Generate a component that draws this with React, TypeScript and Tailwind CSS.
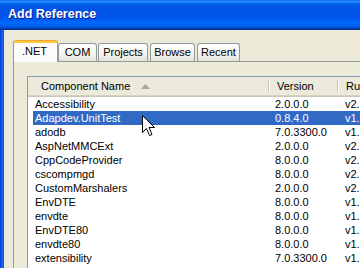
const ROWS = [
  { name: 'Accessibility', version: '2.0.0.0', runtime: 'v2.' },
  { name: 'Adapdev.UnitTest', version: '0.8.4.0', runtime: 'v1.', selected: true },
  { name: 'adodb', version: '7.0.3300.0', runtime: 'v1.' },
  { name: 'AspNetMMCExt', version: '2.0.0.0', runtime: 'v2.' },
  { name: 'CppCodeProvider', version: '8.0.0.0', runtime: 'v2.' },
  { name: 'cscompmgd', version: '8.0.0.0', runtime: 'v2.' },
  { name: 'CustomMarshalers', version: '2.0.0.0', runtime: 'v2.' },
  { name: 'EnvDTE', version: '8.0.0.0', runtime: 'v1.' },
  { name: 'envdte', version: '8.0.0.0', runtime: 'v1.' },
  { name: 'EnvDTE80', version: '8.0.0.0', runtime: 'v1.' },
  { name: 'envdte80', version: '8.0.0.0', runtime: 'v1.' },
  { name: 'extensibility', version: '7.0.3300.0', runtime: 'v1.' }
]

const TABS = [
  { label: 'COM', cls: 'w-[39px]' },
  { label: 'Projects', cls: 'w-[50px] ml-[1px]' },
  { label: 'Browse', cls: 'w-[45px] ml-[2px]' },
  { label: 'Recent', cls: 'w-[43px] ml-[2px]' }
]

function HeaderSep() {
  return (
    <div className="flex h-[13px] self-center">
      <div className="w-px bg-[#c7c5b2]" />
      <div className="w-px bg-white" />
    </div>
  )
}

export default function App() {
  return (
    <div className="relative w-[360px] h-[268px] overflow-hidden flex flex-col bg-[#ece9d8] font-['Liberation_Sans',Arial,sans-serif] text-[11px] text-black select-none">
      {/* title bar */}
      <div className="h-[30px] shrink-0 flex items-center pl-[8px] pb-[2px] bg-[linear-gradient(to_bottom,#0058ee_0%,#3593ff_4%,#288eff_6%,#127dff_8%,#036ffc_10%,#0262ee_14%,#0057e5_20%,#0054e3_24%,#0055eb_56%,#005bf5_66%,#026afe_76%,#0062ef_86%,#0052d6_92%,#0040ab_94%,#003092_100%)]">
        <span className="text-white font-bold text-[12.5px] [text-shadow:1px_1px_#0c1b8a]">Add Reference</span>
      </div>

      <div className="flex-1 flex min-h-0">
        <div className="w-[4px] shrink-0 bg-[linear-gradient(to_right,#0831d9,#166aee_50%,#0855dd)]" />

        <div className="flex-1 flex flex-col pl-[9px] pt-[10px] min-w-0">
          {/* tabs */}
          <div className="h-[21px] shrink-0 flex items-end">
            <div className="relative z-10 w-[45px] h-[22px] -mb-px flex flex-col bg-[#fcfcfe] border-l border-r border-[#919b9c] rounded-t-[3px] overflow-hidden">
              <div className="h-[3px] bg-[linear-gradient(to_bottom,#e68b2c,#ffc73c_40%,#ffc73c)]" />
              <div className="flex-1 flex items-center pl-[8px] pb-[2px]">.NET</div>
            </div>
            {TABS.map((t) => (
              <div
                key={t.label}
                className={`${t.cls} h-[18px] flex items-center justify-center border border-b-0 border-[#919b9c] rounded-t-[3px] bg-[linear-gradient(to_bottom,#ffffff,#f3f3ef_60%,#e3e2da)]`}
              >
                {t.label}
              </div>
            ))}
          </div>

          {/* tab page */}
          <div className="flex-1 border-l border-t border-[#919b9c] bg-[#ecead9] pl-[13px] pt-[14px] min-h-0">
            <div className="w-[400px] h-[300px] border border-[#7f9db9] bg-white flex flex-col">
              {/* header */}
              <div className="h-[20px] shrink-0 flex flex-col">
                <div className="flex-1 flex bg-[#ebeadb]">
                  <div className="w-[240px] flex items-center pl-[13px] pt-[1px]">
                    <span>Component Name</span>
                    <svg width="9" height="5" viewBox="0 0 9 5" className="ml-[11px]">
                      <polygon points="4.5,0 9,5 0,5" fill="#aca899" />
                    </svg>
                  </div>
                  <HeaderSep />
                  <div className="w-[67px] flex items-center pl-[7px] pt-[1px]">Version</div>
                  <HeaderSep />
                  <div className="flex-1 flex items-center pl-[7px] pt-[1px]">Runtime</div>
                </div>
                <div className="h-px bg-[#e2decd]" />
                <div className="h-px bg-[#d6d2c2]" />
                <div className="h-px bg-[#cbc7b8]" />
              </div>

              {/* rows */}
              <div className="flex flex-col">
                {ROWS.map((r) => (
                  <div key={r.name} className="h-[14px] flex pl-[5px]">
                    <div className={`flex-1 flex items-center ${r.selected ? 'bg-[#316ac5] text-white' : ''}`}>
                      <div className="w-[235px] pl-[2px]">{r.name}</div>
                      <div className="w-[69px] pl-[7px]">{r.version}</div>
                      <div className="pl-[8px]">{r.runtime}</div>
                    </div>
                  </div>
                ))}
              </div>
            </div>
          </div>
        </div>
      </div>

      {/* mouse pointer */}
      <svg width="13" height="22" viewBox="0 0 13 22" className="absolute left-[142px] top-[115px]">
        <polygon
          points="0.5,0.5 0.5,17.5 4.5,13.5 7.5,20.5 10,19.5 7,12.5 12.5,12.5"
          fill="#ffffff"
          stroke="#000000"
          strokeWidth="1"
          strokeLinejoin="miter"
        />
      </svg>
    </div>
  )
}
